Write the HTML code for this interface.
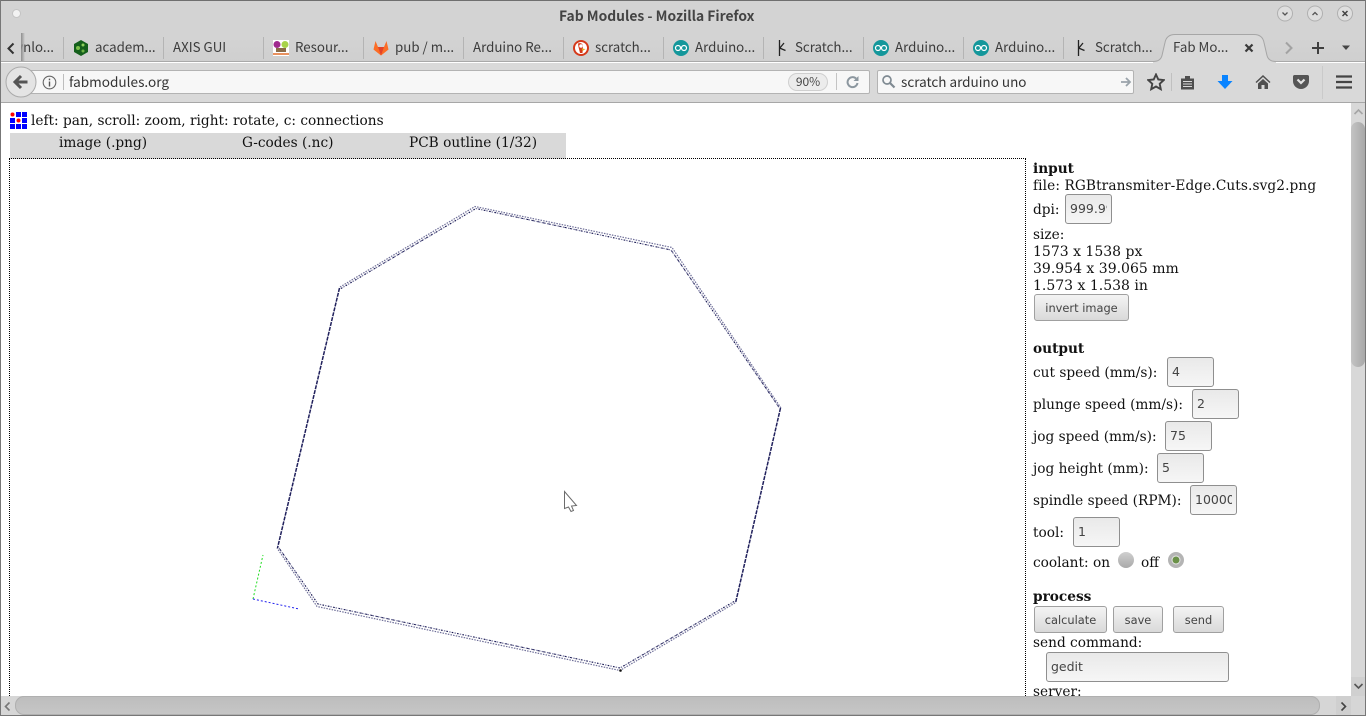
<!DOCTYPE html>
<html>
<head>
<meta charset="utf-8">
<title>Fab Modules - Mozilla Firefox</title>
<style>
html,body{margin:0;padding:0;background:#fff}
#r{position:relative;width:1366px;height:716px;overflow:hidden;background:#fff}
#r div,#r svg{position:absolute}
.u{font-family:"Noto Sans CJK JP","Liberation Sans",sans-serif;font-size:13.3px;color:#3c3c3c;white-space:nowrap;line-height:20px;height:20px}
.p{font-family:"DejaVu Serif","Liberation Serif",serif;font-size:13.7px;color:#111;white-space:nowrap;line-height:17px;height:17px}
.n{font-size:14px}
.b{font-weight:bold}
.i{box-sizing:border-box;height:30px;width:47px;border:1px solid #8f8f8f;border-radius:3px;background:linear-gradient(#e9e9e9,#f6f6f6);font-family:"DejaVu Sans",sans-serif;font-size:12.5px;color:#444;line-height:28px;padding-left:4px;overflow:hidden;white-space:nowrap}
#r .i span{display:block;width:37px;overflow:hidden}
.btn{box-sizing:border-box;height:27px;border:1px solid #a0a0a0;border-radius:3px;background:linear-gradient(#f4f4f4,#d9d9d9);font-family:"DejaVu Sans",sans-serif;font-size:11.4px;color:#444;line-height:27px;text-align:center;white-space:nowrap}
.sep{width:1px;height:22px;top:37px;background:#b4b4b4}
</style>
</head>
<body>
<div id="r">
  <!-- window chrome -->
  <div style="left:0;top:0;width:1366px;height:62px;background:linear-gradient(#d3d3d3 0,#d3d3d3 38px,#cfcfcf 62px)"></div>
  <div style="left:0;top:0;width:1366px;height:1px;background:#6f6f6f"></div>
  <div style="left:0;top:0;width:1px;height:716px;background:#777;z-index:9"></div>
  <div style="left:1365px;top:0;width:1px;height:716px;background:#777;z-index:9"></div>
  <div style="left:12px;top:9px;width:7px;height:7px;border-radius:50%;background:#f2f2f2;border:1px solid #c4c4c4"></div>
  <div class="u" style="left:559px;top:5px;font-weight:700;font-size:13.85px;color:#444">Fab Modules - Mozilla Firefox</div>

  <svg style="left:1270px;top:4px" width="90" height="22" viewBox="0 0 90 22">
    <g fill="#dedede" stroke="#b0b0b0"><circle cx="15" cy="9.500" r="7.500"/><circle cx="45" cy="9.500" r="7.500"/><circle cx="75" cy="9.500" r="7.500"/></g>
    <path d="M12.500 8.500l2.500 2.500 2.500-2.500M42.500 11l2.500-2.500 2.500 2.500" fill="none" stroke="#555" stroke-width="1.300"/>
    <path d="M72.500 7l5 5M77.500 7l-5 5" fill="none" stroke="#444" stroke-width="1.500"/>
  </svg>

  <!-- tab strip -->
  <div style="left:0;top:61px;width:1366px;height:1px;background:#a9a9a9"></div>
  <div style="left:21px;top:37px;width:33px;height:20px;overflow:hidden"><div class="u" style="right:0;top:0">wnlo...</div></div>
  <div style="left:0;top:33px;width:21px;height:28px;background:#d3d3d3"></div>
  <div style="left:21px;top:33px;width:4px;height:28px;background:linear-gradient(90deg,#8d8d8d,rgba(208,208,208,0))"></div>
  <svg style="left:6px;top:42px" width="10" height="13" viewBox="0 0 10 13"><path d="M7.500 1.500L2.500 6.500l5 5" fill="none" stroke="#333" stroke-width="2"/></svg>
  <div class="sep" style="left:63px"></div>
  <div class="sep" style="left:163px"></div>
  <div class="sep" style="left:263px"></div>
  <div class="sep" style="left:363px"></div>
  <div class="sep" style="left:463px"></div>
  <div class="sep" style="left:563px"></div>
  <div class="sep" style="left:663px"></div>
  <div class="sep" style="left:763px"></div>
  <div class="sep" style="left:863px"></div>
  <div class="sep" style="left:963px"></div>
  <div class="sep" style="left:1063px"></div>

  <div class="u" style="left:95px;top:37px">academ...</div>
  <div class="u" style="left:173px;top:37px">AXIS GUI</div>
  <div class="u" style="left:295px;top:37px">Resour...</div>
  <div class="u" style="left:395px;top:37px">pub / m...</div>
  <div class="u" style="left:473px;top:37px">Arduino Re...</div>
  <div class="u" style="left:595px;top:37px">scratch...</div>
  <div class="u" style="left:695px;top:37px">Arduino...</div>
  <div class="u" style="left:795px;top:37px">Scratch...</div>
  <div class="u" style="left:895px;top:37px">Arduino...</div>
  <div class="u" style="left:995px;top:37px">Arduino...</div>
  <div class="u" style="left:1095px;top:37px">Scratch...</div>

  <!-- favicons -->
  <svg style="left:73px;top:40px" width="16" height="16" viewBox="0 0 16 16"><path d="M8 0l7 4v8l-7 4-7-4V4z" fill="#145f1c"/><circle cx="5" cy="8" r="2" fill="#7cc04b"/><circle cx="10" cy="5" r="1.500" fill="#8ed05c"/><circle cx="10" cy="11" r="1.500" fill="#6fb344"/></svg>
  <svg style="left:273px;top:40px" width="16" height="16" viewBox="0 0 16 16"><rect width="16" height="16" fill="#fff"/><circle cx="4" cy="4.500" r="3.500" fill="#a02a8f"/><circle cx="12" cy="4.500" r="3.500" fill="#a8d34a"/><rect x="3" y="8" width="10" height="4" fill="#8a6b48"/><rect x="0" y="13" width="16" height="2" fill="#e8915f"/></svg>
  <svg style="left:373px;top:40px" width="16" height="16" viewBox="0 0 16 16"><path d="M8 15.500L.5 9.500 2.500 1 5 7h6l2.500-6 2 8.500z" fill="#fc6d26"/><path d="M8 15.500L5 7h6z" fill="#e24329"/></svg>
  <svg style="left:573px;top:40px" width="16" height="16" viewBox="0 0 16 16"><circle cx="8" cy="8" r="8" fill="#d5391a"/><circle cx="8" cy="8" r="6" fill="#fff"/><path d="M5 3.500c3-1 5 .5 5 3l-.5 6.500H7L5.500 7z" fill="#d5391a"/><circle cx="8" cy="6" r="1.800" fill="#fff"/><path d="M8.500 8.500l4 .5-3 2z" fill="#e0b020"/></svg>
  <svg style="left:673px;top:40px" width="16" height="16" viewBox="0 0 16 16"><circle cx="8" cy="8" r="8" fill="#14979b"/><circle cx="5" cy="8" r="2.500" fill="none" stroke="#fff" stroke-width="1.200"/><circle cx="11" cy="8" r="2.500" fill="none" stroke="#fff" stroke-width="1.200"/></svg>
  <svg style="left:873px;top:40px" width="16" height="16" viewBox="0 0 16 16"><circle cx="8" cy="8" r="8" fill="#14979b"/><circle cx="5" cy="8" r="2.500" fill="none" stroke="#fff" stroke-width="1.200"/><circle cx="11" cy="8" r="2.500" fill="none" stroke="#fff" stroke-width="1.200"/></svg>
  <svg style="left:973px;top:40px" width="16" height="16" viewBox="0 0 16 16"><circle cx="8" cy="8" r="8" fill="#14979b"/><circle cx="5" cy="8" r="2.500" fill="none" stroke="#fff" stroke-width="1.200"/><circle cx="11" cy="8" r="2.500" fill="none" stroke="#fff" stroke-width="1.200"/></svg>
  <svg style="left:774px;top:40px" width="16" height="16" viewBox="0 0 16 16"><path d="M5.500 0v16M5.500 8.500L10 3M5.500 8l6 2.500" fill="none" stroke="#222" stroke-width="1.300"/></svg>
  <svg style="left:1073px;top:40px" width="16" height="16" viewBox="0 0 16 16"><path d="M5.500 0v16M5.500 8.500L10 3M5.500 8l6 2.500" fill="none" stroke="#222" stroke-width="1.300"/></svg>

  <!-- active tab -->
  <svg style="left:1150px;top:32px" width="130" height="31" viewBox="0 0 130 31"><path d="M3 29.500c5 0 8-2 9-6l3-13c1-5 4-8 10-8h79c6 0 9 3 10 8l3 13c1 4 4 6 9 6v2H3z" fill="#d9d9d9"/><path d="M3 29.500c5 0 8-2 9-6l3-13c1-5 4-8 10-8h79c6 0 9 3 10 8l3 13c1 4 4 6 9 6" fill="none" stroke="#a6a6a6"/></svg>
  <div class="u" style="left:1173px;top:37px">Fab Mo...</div>
  <svg style="left:1244px;top:43px" width="10" height="10" viewBox="0 0 10 10"><path d="M1.500 1.500l7 7M8.500 1.500l-7 7" stroke="#3a3a3a" stroke-width="2.200" fill="none"/></svg>
  <svg style="left:1284px;top:41px" width="10" height="14" viewBox="0 0 10 14"><path d="M2 1.500L7.500 7 2 12.500" fill="none" stroke="#a2a2a2" stroke-width="2"/></svg>
  <svg style="left:1311px;top:41px" width="14" height="14" viewBox="0 0 14 14"><path d="M7 1v12M1 7h12" stroke="#3f3f3f" stroke-width="2" fill="none"/></svg>
  <svg style="left:1341px;top:45px" width="10" height="6" viewBox="0 0 10 6"><path d="M1 .5h8L5 5z" fill="#444"/></svg>

  <!-- nav bar -->
  <div style="left:0;top:63px;width:1366px;height:39px;background:#d9d9d9"></div>
  <div style="left:0;top:102px;width:1366px;height:1px;background:#a7a7a7"></div>
  <div style="box-sizing:border-box;left:22px;top:70px;width:848px;height:24px;background:#f7f7f7;border:1px solid #b3b3b3;border-radius:2px"></div>
  <svg style="left:5px;top:66px" width="32" height="32" viewBox="0 0 32 32"><circle cx="16" cy="16" r="15" fill="#e4e4e4" stroke="#aaa"/><path d="M22.500 16H11M16 10l-6 6 6 6" fill="none" stroke="#555" stroke-width="3"/></svg>
  <svg style="left:42px;top:75px" width="15" height="15" viewBox="0 0 15 15"><circle cx="7.500" cy="7.500" r="6.300" fill="none" stroke="#666" stroke-width="1.100"/><path d="M7.500 6.500v5M7.500 3.600v1.600" stroke="#555" stroke-width="1.400" fill="none"/></svg>
  <div style="left:63px;top:74px;width:1px;height:16px;background:#bdbdbd"></div>
  <div class="u" style="left:69px;top:71px;color:#333;font-size:13.6px">fabmodules.org</div>
  <div style="box-sizing:border-box;left:788px;top:73px;width:40px;height:18px;border:1px solid #cfcfcf;border-radius:9px;background:#ececec;font:12px/16px 'Noto Sans CJK JP',sans-serif;color:#444;text-align:center">90%</div>
  <div style="left:836px;top:73px;width:1px;height:17px;background:#c4c4c4"></div>
  <svg style="left:846px;top:75px" width="14" height="14" viewBox="0 0 14 14"><path d="M11.500 8a5 5 0 1 1-1.500-4.500" fill="none" stroke="#8c979f" stroke-width="2"/><path d="M12.500 1v5h-5z" fill="#8c979f"/></svg>

  <div style="box-sizing:border-box;left:877px;top:70px;width:257px;height:24px;background:#f7f7f7;border:1px solid #b3b3b3;border-radius:2px"></div>
  <svg style="left:881px;top:74px" width="15" height="15" viewBox="0 0 15 15"><circle cx="6" cy="6" r="4" fill="none" stroke="#7f8a92" stroke-width="1.700"/><path d="M9 9l4.500 4.500" stroke="#7f8a92" stroke-width="2.200"/></svg>
  <div class="u" style="left:901px;top:71px;color:#333;font-size:13.5px">scratch arduino uno</div>
  <svg style="left:1120px;top:76px" width="12" height="12" viewBox="0 0 12 12"><path d="M1 6h8M6 2l4 4-4 4" fill="none" stroke="#9aa3aa" stroke-width="1.800"/></svg>

  <svg style="left:1147px;top:73px" width="18" height="18" viewBox="0 0 18 18"><path d="M9 1.500l2.300 5 5.400.6-4 3.700 1.100 5.400L9 13.500l-4.800 2.700 1.100-5.400-4-3.700 5.400-.6z" fill="none" stroke="#444" stroke-width="1.900"/></svg>
  <div style="left:1171px;top:73px;width:1px;height:18px;background:#c0c0c0"></div>
  <svg style="left:1180px;top:75px" width="15" height="15" viewBox="0 0 15 15"><path d="M1 3.500h4V1h5v2.500h4V14.500H1z" fill="#4f4f4f"/><path d="M3 6.500h9M3 9h9M3 11.500h9" stroke="#d9d9d9" stroke-width="1.100"/></svg>
  <svg style="left:1217px;top:74px" width="16" height="16" viewBox="0 0 16 16"><path d="M5 1h6v6h4.500L8 15 .5 7H5z" fill="#0a84ff"/></svg>
  <svg style="left:1255px;top:74px" width="16" height="16" viewBox="0 0 16 16"><path d="M8 1L.5 8l1 1L8 3l6.500 6 1-1z" fill="#4f4f4f"/><path d="M3 9.500L8 5l5 4.500V15H9.500v-4h-3v4H3z" fill="#4f4f4f"/></svg>
  <svg style="left:1293px;top:74px" width="16" height="15" viewBox="0 0 16 15"><path d="M1.500 1h13c.8 0 1.500.7 1.500 1.500V7a8 8 0 0 1-16 0V2.500C0 1.700.7 1 1.500 1z" fill="#555"/><path d="M4.500 5.500L8 9l3.500-3.500" fill="none" stroke="#e2e2e2" stroke-width="2.200"/></svg>
  <div style="left:1322px;top:66px;width:1px;height:33px;background:#cacaca"></div>
  <svg style="left:1336px;top:74px" width="16" height="16" viewBox="0 0 16 16"><path d="M0 2.500h16M0 8h16M0 13.500h16" stroke="#444" stroke-width="2.300"/></svg>

  <!-- page -->
  <svg style="left:10px;top:112px" width="17" height="17" viewBox="0 0 17 17">
    <g fill="#00f"><rect x="6" y="0" width="5" height="5"/><rect x="12" y="0" width="5" height="5"/><rect x="0" y="6" width="5" height="5"/><rect x="12" y="6" width="5" height="5"/><rect x="0" y="12" width="5" height="5"/><rect x="6" y="12" width="5" height="5"/><rect x="12" y="12" width="5" height="5"/></g>
    <circle cx="2.500" cy="2.500" r="2" fill="#f00"/><circle cx="8.500" cy="8.500" r="2" fill="#f00"/>
  </svg>
  <div class="p" style="left:31px;top:113px">left: pan, scroll: zoom, right: rotate, c: connections</div>

  <div style="left:10px;top:133px;width:556px;height:26px;background:#d9d9d9"></div>
  <div class="p" style="left:59px;top:135px">image (.png)</div>
  <div class="p" style="left:242px;top:135px">G-codes (.nc)</div>
  <div class="p" style="left:409px;top:135px">PCB outline (1/32)</div>

  <div style="box-sizing:border-box;left:9px;top:158px;width:1017px;height:560px;border:1px dotted #000"></div>

  <svg style="left:0;top:0" width="1366" height="716" viewBox="0 0 1366 716">
    <g fill="none">
      <path d="M340 287L475 206.500 672 247.500 781 408M735 603L620 670.500 317 606.500 277 548" stroke="#6e6e98" stroke-width="1.200" stroke-dasharray="1.500 1.200"/>
      <path d="M341 288.500L476 208.500 671 250 779.500 408M734 601.500L620 668 318 604 279 548" stroke="#77779f" stroke-width="1.200" stroke-dasharray="1.500 1.200"/>
      <path d="M341 288.500L476 208.500 671 250 779.500 408M734 601.500L620 668 318 604 279 548" stroke="#15154f" stroke-width="1" stroke-dasharray="1.500 4"/>
      <path d="M339.500 288L277.500 548M780.500 408L735.500 603" stroke="#20205c" stroke-width="1.500" stroke-dasharray="4 1"/>
      <path d="M253 599L263 555" stroke="#22dd22" stroke-width="1" stroke-dasharray="2 2"/>
      <path d="M253 599L299 609" stroke="#2222ee" stroke-width="1" stroke-dasharray="2 2"/>
    </g>
    <circle cx="620.500" cy="670.500" r="1.300" fill="#111"/>
    <path d="M564.500 491.500v17l4-1.500 2.500 4.500 2.500-1-2-4.500 5-.5z" fill="#fff" stroke="#6c6c6c" stroke-width="1"/>
  </svg>

  <!-- right panel -->
  <div class="p b" style="left:1033px;top:161px">input</div>
  <div class="p" style="left:1033px;top:178px;letter-spacing:.1px">file: RGBtransmiter-Edge.Cuts.svg2.png</div>
  <div class="p" style="left:1033px;top:202px">dpi:</div>
  <div class="i" style="left:1065px;top:194px"><span>999.99</span></div>
  <div class="p" style="left:1033px;top:227px">size:</div>
  <div class="p n" style="left:1033px;top:244px">1573 x 1538 px</div>
  <div class="p n" style="left:1033px;top:261px">39.954 x 39.065 mm</div>
  <div class="p n" style="left:1033px;top:278px">1.573 x 1.538 in</div>
  <div class="btn" style="left:1034px;top:294px;width:95px">invert image</div>

  <div class="p b" style="left:1033px;top:341px">output</div>
  <div class="p" style="left:1033px;top:365px">cut speed (mm/s):</div>
  <div class="i" style="left:1167px;top:357px">4</div>
  <div class="p" style="left:1033px;top:397px">plunge speed (mm/s):</div>
  <div class="i" style="left:1192px;top:389px">2</div>
  <div class="p" style="left:1033px;top:429px">jog speed (mm/s):</div>
  <div class="i" style="left:1165px;top:421px">75</div>
  <div class="p" style="left:1033px;top:461px">jog height (mm):</div>
  <div class="i" style="left:1157px;top:453px">5</div>
  <div class="p" style="left:1033px;top:493px">spindle speed (RPM):</div>
  <div class="i" style="left:1190px;top:485px"><span>10000</span></div>
  <div class="p" style="left:1033px;top:525px">tool:</div>
  <div class="i" style="left:1073px;top:517px">1</div>
  <div class="p" style="left:1033px;top:555px">coolant: on</div>
  <svg style="left:1117px;top:551px" width="18" height="18" viewBox="0 0 18 18"><defs><linearGradient id="g" x1="0" y1="0" x2="0" y2="1"><stop offset="0" stop-color="#cfcfcf"/><stop offset="1" stop-color="#a9a9a9"/></linearGradient></defs><circle cx="9" cy="9" r="8" fill="url(#g)"/></svg>
  <div class="p" style="left:1141px;top:555px">off</div>
  <svg style="left:1167px;top:551px" width="18" height="18" viewBox="0 0 18 18"><circle cx="9" cy="9" r="8" fill="#b4b4b4"/><circle cx="9" cy="9" r="4" fill="#6a9148" stroke="#e6e6e6" stroke-width="1"/></svg>

  <div class="p b" style="left:1033px;top:589px">process</div>
  <div class="btn" style="left:1034px;top:606px;width:73px">calculate</div>
  <div class="btn" style="left:1113px;top:606px;width:50px">save</div>
  <div class="btn" style="left:1173px;top:606px;width:51px">send</div>
  <div class="p" style="left:1033px;top:635px">send command:</div>
  <div class="i" style="left:1046px;top:652px;width:183px">gedit</div>
  <div class="p" style="left:1033px;top:684px">server:</div>

  <!-- vertical scrollbar -->
  <div style="left:1351px;top:103px;width:15px;height:593px;background:#d8d8d8"></div>
  <div style="left:1351px;top:122px;width:14px;height:245px;border-radius:7px;background:linear-gradient(90deg,#c4c4c4,#a8a8a8)"></div>
  <svg style="left:1353px;top:108px" width="11" height="8" viewBox="0 0 11 8"><path d="M1.500 6L5.500 2l4 4" fill="none" stroke="#a5a5a5" stroke-width="1.600"/></svg>
  <div style="left:1351px;top:677px;width:15px;height:20px;background:#d0d0d0"></div>
  <svg style="left:1353px;top:682px" width="11" height="8" viewBox="0 0 11 8"><path d="M1.500 2l4 4 4-4" fill="none" stroke="#555" stroke-width="1.600"/></svg>

  <!-- horizontal scrollbar -->
  <div style="left:0;top:696px;width:1366px;height:19px;background:#d6d6d6"></div>
  <div style="left:15px;top:696px;width:1305px;height:19px;border-radius:9px;background:linear-gradient(#bdbdbd,#c6c6c6);box-shadow:inset 0 0 0 1px #b0b0b0"></div>
  <svg style="left:3px;top:701px" width="9" height="11" viewBox="0 0 9 11"><path d="M6.500 1.500L2.500 5.500l4 4" fill="none" stroke="#777" stroke-width="1.600"/></svg>
  <div style="left:1336px;top:696px;width:15px;height:19px;background:#cfcfcf"></div>
  <svg style="left:1339px;top:701px" width="9" height="11" viewBox="0 0 9 11"><path d="M2.500 1.500l4 4-4 4" fill="none" stroke="#444" stroke-width="1.600"/></svg>
  <div style="left:0;top:715px;width:1366px;height:1px;background:#777"></div>
</div>
</body>
</html>
